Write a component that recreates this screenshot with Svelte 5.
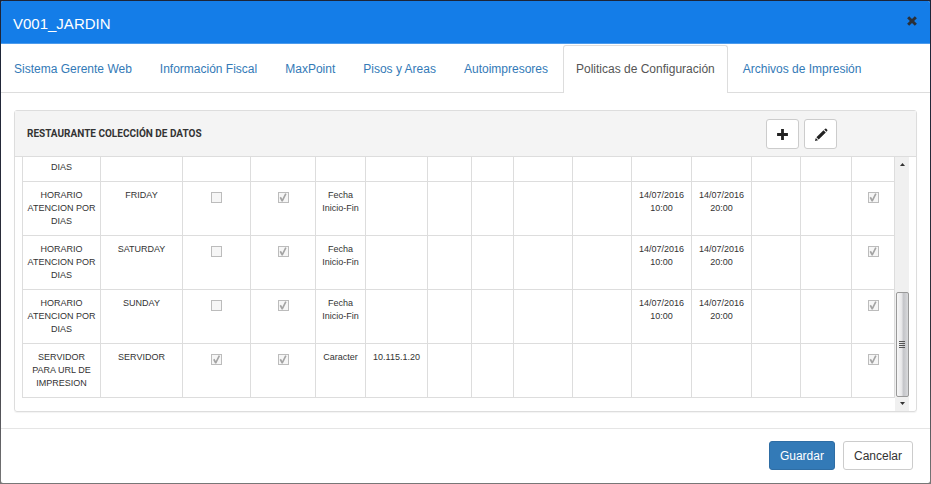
<script>
  const tabs = [
    'Sistema Gerente Web',
    'Información Fiscal',
    'MaxPoint',
    'Pisos y Areas',
    'Autoimpresores',
    'Politicas de Configuración',
    'Archivos de Impresión'
  ];
  let active = $state(5);

  const columns = [78, 82, 68, 65, 50, 62, 44, 42, 59, 59, 60, 60, 49, 51, 43];
  const total = columns.reduce((a, b) => a + b, 0);

  const day = (name) => [
    'HORARIO ATENCION POR DIAS', name, false, true, 'Fecha Inicio-Fin',
    '', '', '', '', '', '14/07/2016 10:00', '14/07/2016 20:00', '', '', true
  ];
  const rows = [
    ['DIAS', '', '', '', '', '', '', '', '', '', '', '', '', '', ''],
    day('FRIDAY'),
    day('SATURDAY'),
    day('SUNDAY'),
    ['SERVIDOR PARA URL DE IMPRESION', 'SERVIDOR', true, true, 'Caracter',
      '10.115.1.20', '', '', '', '', '', '', '', '', true]
  ];
</script>

<div class="backdrop">
  <div class="modal" role="dialog" aria-labelledby="title">
    <header>
      <h1 id="title">V001_JARDIN</h1>
      <button class="close" aria-label="Cerrar">
        <svg width="10" height="10" viewBox="0 0 10 10"><path d="M2.2 0.3 5 2.9 7.8 0.3 9.9 2.3 7.1 5 9.9 7.7 7.8 9.7 5 7.1 2.2 9.7 0.1 7.7 2.9 5 0.1 2.3Z" /></svg>
      </button>
    </header>

    <nav>
      {#each tabs as tab, i}
        <a href="#tab{i}" class:active={active === i} onclick={(e) => { e.preventDefault(); active = i; }}>{tab}</a>
      {/each}
    </nav>

    <main>
      <section class="panel">
        <div class="panel-head">
          <h2>RESTAURANTE COLECCIÓN DE DATOS</h2>
          <div class="tools">
            <button aria-label="Agregar">
              <svg width="13" height="13" viewBox="0 0 12 12"><path d="M4.7 1h2.6v3.7H11v2.6H7.3V11H4.7V7.3H1V4.7h3.7z" /></svg>
            </button>
            <button aria-label="Editar">
              <svg width="14" height="14" viewBox="0 0 14 14"><path d="M10.2 1.5 11.2 0.7q.6-.4 1.1.1l.9.9q.5.5.1 1.1l-.9 1zM9.5 2.2 11.8 4.5 4.7 11.6 2.4 9.3zM1.8 9.9 4.1 12.2 0.9 13.1z" /></svg>
            </button>
          </div>
        </div>
        <div class="panel-body">
          <div class="scroller">
            <table>
              <colgroup>
                {#each columns as c}
                  <col style="width: {(c / total) * 100}%" />
                {/each}
              </colgroup>
              <tbody>
                {#each rows as row}
                  <tr>
                    {#each row as cell, c}
                      <td>
                        {#if typeof cell === 'boolean'}
                          <input type="checkbox" checked={cell} disabled aria-label="{row[1]} {c + 1}" />
                        {:else}
                          {cell}
                        {/if}
                      </td>
                    {/each}
                  </tr>
                {/each}
              </tbody>
            </table>
          </div>
          <div class="track" aria-hidden="true">
            <svg width="5" height="3" viewBox="0 0 5 3"><path d="M0 3 2.5 0 5 3z" /></svg>
            <div class="space"></div>
            <div class="thumb"><i></i><i></i><i></i><i></i></div>
            <svg width="5" height="3" viewBox="0 0 5 3"><path d="M0 0 2.5 3 5 0z" /></svg>
          </div>
        </div>
      </section>
    </main>

    <footer>
      <button class="primary">Guardar</button>
      <button>Cancelar</button>
    </footer>
  </div>
</div>

<style>
  * { box-sizing: border-box; }
  .backdrop {
    padding: 1px;
    background: linear-gradient(#1c2438, #30303a 70%, #777);
    font: 12px/18px "Liberation Sans", Arial, sans-serif;
    color: #333;
  }
  .modal {
    background: #fff;
    border-radius: 2px;
    overflow: hidden;
  }
  header {
    display: flex;
    align-items: flex-start;
    justify-content: space-between;
    height: 43px;
    padding: 13px 13px 0 12px;
    background: #147de8;
    border-bottom: 1px solid #4c9bec;
  }
  h1 {
    margin: 0;
    font-size: 15px;
    line-height: 20px;
    font-weight: 400;
    color: #fff;
  }
  button {
    font: inherit;
    color: #333;
    background: #fff;
    border: 1px solid #ccc;
    border-radius: 3px;
    cursor: pointer;
  }
  button svg { display: block; fill: #222; }
  .close {
    padding: 2px 0;
    border: 0;
    background: none;
  }
  .close svg { fill: #2b3038; }
  nav {
    display: flex;
    border-bottom: 1px solid #ddd;
  }
  nav a {
    margin: 1px 2px -1px 0;
    padding: 15px 12px;
    border: 1px solid transparent;
    border-bottom: 0;
    border-radius: 3px 3px 0 0;
    line-height: 17px;
    color: #337ab7;
    text-decoration: none;
    white-space: nowrap;
  }
  nav a.active {
    color: #555;
    background: #fff;
    border-color: #ddd;
  }
  main { padding: 17px 13px 16px; }
  .panel {
    border: 1px solid #ddd;
    border-radius: 3px;
    box-shadow: 0 1px 1px rgba(0, 0, 0, 0.05);
  }
  .panel-head {
    display: flex;
    align-items: center;
    justify-content: space-between;
    height: 46px;
    padding: 0 79px 0 12px;
    background: #f4f4f4;
    border-bottom: 1px solid #ddd;
  }
  h2 {
    margin: 0;
    font-family: Roboto, "Liberation Sans", sans-serif;
    font-size: 10px;
    line-height: 14px;
    font-weight: 700;
  }
  .tools { display: flex; gap: 5px; }
  .tools button {
    display: flex;
    align-items: center;
    justify-content: center;
    width: 33px;
    height: 30px;
    padding: 2px 0 0;
  }
  .panel-body {
    display: flex;
    padding: 0 7px;
  }
  .scroller {
    flex: 1;
    padding-bottom: 13px;
  }
  table {
    width: 100%;
    table-layout: fixed;
    border-collapse: collapse;
    font-size: 9px;
    line-height: 13px;
    text-align: center;
  }
  td {
    height: 54px;
    padding: 7px 4px;
    border: 1px solid #ddd;
    vertical-align: top;
  }
  tr:first-child td {
    height: 24px;
    padding: 4px 4px 7px;
    border-top: 0;
  }
  input {
    appearance: none;
    display: block;
    width: 11px;
    height: 11px;
    margin: 3px auto 0;
    border: 1px solid #bcbcbc;
    background: #f6f6f6;
  }
  input:checked::before {
    content: "";
    display: block;
    width: 9px;
    height: 9px;
    background: #a4a4a4;
    clip-path: polygon(12% 52%, 28% 42%, 42% 66%, 74% 4%, 90% 12%, 48% 94%, 34% 94%);
  }
  .track {
    display: flex;
    flex-direction: column;
    align-items: center;
    width: 14px;
    padding: 6px 0;
    background: #f0f0f0;
  }
  .track svg { flex: none; fill: #333; }
  .space { flex: 1; }
  .thumb {
    display: flex;
    flex-direction: column;
    align-items: center;
    justify-content: center;
    gap: 1px;
    width: 13px;
    height: 105px;
    margin-bottom: 5px;
    border: 1px solid #999;
    border-radius: 2px;
    background: linear-gradient(90deg, #f7f7f7, #e8e8ea 40%, #c4c5c9 60%, #d9dadc);
  }
  .thumb i {
    width: 6px;
    height: 1px;
    background: #555;
  }
  footer {
    display: flex;
    justify-content: flex-end;
    gap: 8px;
    padding: 12px 17px 13px;
    border-top: 1px solid #e5e5e5;
  }
  footer button {
    height: 29px;
    padding: 0 10px;
  }
  footer .primary {
    color: #fff;
    background: #337ab7;
    border-color: #2e6da4;
  }
</style>
